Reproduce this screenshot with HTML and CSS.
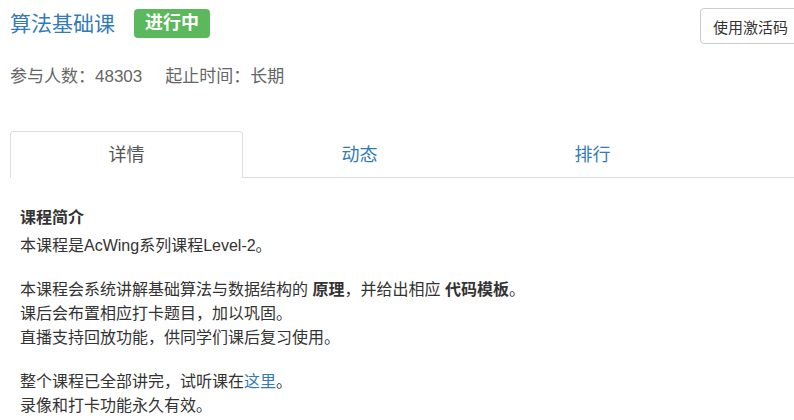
FILE: index.html
```html
<!DOCTYPE html>
<html lang="zh-CN">
<head>
    <meta charset="UTF-8">
    <meta name="viewport" content="width=device-width, initial-scale=1.0">
    <title>算法基础课</title>
    <link rel="stylesheet" href="styles.css">
</head>
<body>
    <div class="page">
        <div class="course-header">
            <div class="title-row">
                <h3 class="course-title">算法基础课</h3>
                <span class="status-badge">进行中</span>
            </div>
            <button class="btn-activate">使用激活码</button>
        </div>

        <div class="course-meta">
            <span>参与人数：48303</span>
            <span>起止时间：长期</span>
        </div>

        <ul class="course-tabs">
            <li class="tab active">详情</li>
            <li class="tab">动态</li>
            <li class="tab">排行</li>
        </ul>

        <div class="tab-content">
            <h4 class="section-title">课程简介</h4>
            <p>本课程是AcWing系列课程Level-2。</p>
            <p>本课程会系统讲解基础算法与数据结构的 <strong>原理</strong>，并给出相应 <strong>代码模板</strong>。<br>
            课后会布置相应打卡题目，加以巩固。<br>
            直播支持回放功能，供同学们课后复习使用。</p>
            <p>整个课程已全部讲完，试听课在<a href="#">这里</a>。<br>
            录像和打卡功能永久有效。</p>
        </div>
    </div>
</body>
</html>
```

FILE: styles.css
```css
body {
    margin: 0;
    overflow: hidden;
    background-color: #fff;
    font-family: "Liberation Sans", "Noto Sans CJK SC", sans-serif;
    color: #333;
}

.page {
    width: 791px;
    padding: 8px 0 0 10px;
}

.course-header {
    display: flex;
    justify-content: space-between;
    align-items: flex-start;
}

.title-row {
    display: flex;
    align-items: center;
    gap: 19px;
    margin-top: 1px;
}

.course-title {
    margin: 0;
    font-size: 21px;
    font-weight: normal;
    line-height: 29px;
    color: #337ab7;
}

.status-badge {
    display: inline-block;
    height: 29px;
    line-height: 29px;
    padding: 0 11px;
    font-size: 18px;
    font-weight: bold;
    color: #fff;
    background-color: #5cb85c;
    border-radius: 4px;
}

.btn-activate {
    flex-shrink: 0;
    height: 36px;
    padding: 0 12px;
    font-family: inherit;
    font-size: 15px;
    color: #333;
    background-color: #fff;
    border: 1px solid #ccc;
    border-radius: 4px;
}

.course-meta {
    display: flex;
    gap: 23px;
    margin-top: 21px;
    font-size: 17px;
    line-height: 24px;
    color: #666;
}

.course-tabs {
    display: flex;
    list-style: none;
    margin: 42px 0 0 0;
    padding: 0;
    border-bottom: 1px solid #ddd;
}

.tab {
    width: 233px;
    height: 47px;
    line-height: 47px;
    text-align: center;
    font-size: 18px;
    color: #337ab7;
    border: 1px solid transparent;
    border-bottom: none;
    border-radius: 4px 4px 0 0;
    box-sizing: border-box;
    margin-bottom: -1px;
}

.tab.active {
    color: #555;
    background-color: #fff;
    border-color: #ddd;
}

.tab-content {
    padding: 28px 10px;
    font-size: 16px;
    line-height: 24px;
}

.section-title {
    margin: 0 0 4px 0;
    font-size: 16px;
    font-weight: bold;
    line-height: 24px;
}

.tab-content p {
    margin: 0 0 20px 0;
}

.tab-content a {
    color: #337ab7;
    text-decoration: none;
}
```
